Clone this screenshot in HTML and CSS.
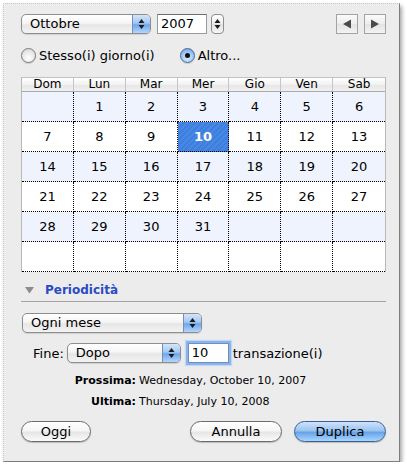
FILE: index.html
```html
<!DOCTYPE html>
<html>
<head>
<meta charset="utf-8">
<link rel="stylesheet" href="styles.css">
</head>
<body>
<div class="window">
  <div class="top-row">
    <div class="popup month">
      <span class="popup-label">Ottobre</span>
      <span class="popup-arrows"><svg width="7" height="12" viewBox="0 0 7 12"><path d="M3.5 1 L6.5 5 L0.5 5 Z M0.5 7 L6.5 7 L3.5 11 Z" fill="#1b1b1b"/></svg></span>
    </div>
    <div class="textfield year">2007</div>
    <div class="stepper"><svg width="7" height="12" viewBox="0 0 7 12"><path d="M3.5 1 L6.5 5 L0.5 5 Z M0.5 7 L6.5 7 L3.5 11 Z" fill="#1b1b1b"/></svg></div>
    <div class="spacer"></div>
    <div class="navbtn"><svg width="10" height="10" viewBox="0 0 10 10"><path d="M1 5 L9 0.5 L9 9.5 Z" fill="#4a4a4a"/></svg></div>
    <div class="navbtn"><svg width="10" height="10" viewBox="0 0 10 10"><path d="M9 5 L1 0.5 L1 9.5 Z" fill="#4a4a4a"/></svg></div>
  </div>

  <div class="radio-row">
    <label class="radio"><span class="radio-dot"></span>Stesso(i) giorno(i)</label>
    <label class="radio checked"><span class="radio-dot"></span>Altro...</label>
  </div>

  <div class="cal">
    <div class="hd">Dom</div><div class="hd">Lun</div><div class="hd">Mar</div><div class="hd">Mer</div><div class="hd">Gio</div><div class="hd">Ven</div><div class="hd last">Sab</div>

    <div class="c alt"></div><div class="c alt">1</div><div class="c alt">2</div><div class="c alt">3</div><div class="c alt">4</div><div class="c alt">5</div><div class="c alt last">6</div>
    <div class="c">7</div><div class="c">8</div><div class="c">9</div><div class="c sel">10</div><div class="c">11</div><div class="c">12</div><div class="c last">13</div>
    <div class="c alt">14</div><div class="c alt">15</div><div class="c alt">16</div><div class="c alt">17</div><div class="c alt">18</div><div class="c alt">19</div><div class="c alt last">20</div>
    <div class="c">21</div><div class="c">22</div><div class="c">23</div><div class="c">24</div><div class="c">25</div><div class="c">26</div><div class="c last">27</div>
    <div class="c alt">28</div><div class="c alt">29</div><div class="c alt">30</div><div class="c alt">31</div><div class="c alt"></div><div class="c alt"></div><div class="c alt last"></div>
    <div class="c"></div><div class="c"></div><div class="c"></div><div class="c"></div><div class="c"></div><div class="c"></div><div class="c last"></div>
  </div>

  <div class="disclosure">
    <svg width="9" height="7" viewBox="0 0 9 7"><path d="M0 0 L9 0 L4.5 6.5 Z" fill="#8c8c8c"/></svg>
    <span>Periodicità</span>
  </div>
  <div class="separator"></div>

  <div class="popup freq">
    <span class="popup-label">Ogni mese</span>
    <span class="popup-arrows"><svg width="7" height="12" viewBox="0 0 7 12"><path d="M3.5 1 L6.5 5 L0.5 5 Z M0.5 7 L6.5 7 L3.5 11 Z" fill="#1b1b1b"/></svg></span>
  </div>

  <div class="fine-row">
    <span class="fine-label">Fine:</span>
    <div class="popup end">
      <span class="popup-label">Dopo</span>
      <span class="popup-arrows"><svg width="7" height="12" viewBox="0 0 7 12"><path d="M3.5 1 L6.5 5 L0.5 5 Z M0.5 7 L6.5 7 L3.5 11 Z" fill="#1b1b1b"/></svg></span>
    </div>
    <div class="textfield count">10</div>
    <span class="unit">transazione(i)</span>
  </div>

  <div class="info">
    <span class="info-key">Prossima:</span><span class="info-val">Wednesday, October 10, 2007</span>
    <span class="info-key">Ultima:</span><span class="info-val">Thursday, July 10, 2008</span>
  </div>

  <div class="buttons">
    <button class="btn oggi">Oggi</button>
    <div class="spacer"></div>
    <button class="btn annulla">Annulla</button>
    <button class="btn default duplica">Duplica</button>
  </div>
</div>
</body>
</html>
```

FILE: styles.css
```css
html, body {
  margin: 0;
  padding: 0;
  background: #ffffff;
}

body {
  font-family: "DejaVu Sans", "Liberation Sans", sans-serif;
  font-size: 12px;
  color: #000;
}

.window {
  box-sizing: border-box;
  margin: 3px 0 0 3px;
  width: 397px;
  height: 459px;
  background: #ececec;
  border-left: 1px dotted #c9c9c9;
  border-top: 1px dotted #c9c9c9;
  border-right: 1px solid #7d7d7d;
  border-bottom: 1px solid #7d7d7d;
  box-shadow: 2px 3px 4px rgba(0, 0, 0, 0.35);
  padding: 10px 0 0 17px;
}

.spacer { flex: 1; }

/* top row */
.top-row {
  display: flex;
  align-items: center;
  height: 20px;
  width: 365px;
}

.popup {
  box-sizing: border-box;
  display: flex;
  height: 20px;
  border: 1px solid #8e8e8e;
  border-radius: 5px;
  background: linear-gradient(#ffffff, #f5f5f5 45%, #e6e6e6 55%, #f3f3f3);
  box-shadow: 0 1px 1px rgba(0, 0, 0, 0.12);
  overflow: hidden;
}
.popup-label {
  flex: 1;
  padding-left: 8px;
  line-height: 18px;
  font-size: 13px;
}
.popup-arrows {
  width: 17px;
  display: flex;
  align-items: center;
  justify-content: center;
  border-left: 1px solid #7a8fae;
  background: linear-gradient(#d3e5fa, #a3c8f3 45%, #6fa6ec 55%, #b3d6fb);
}
.month { width: 130px; }

.textfield {
  box-sizing: border-box;
  height: 20px;
  background: #fff;
  border: 1px solid #9a9a9a;
  border-top-color: #6d6d6d;
  font-size: 13px;
  line-height: 18px;
  padding-left: 3px;
}
.year {
  width: 50px;
  margin-left: 6px;
}
.stepper {
  box-sizing: border-box;
  width: 13px;
  height: 20px;
  margin-left: 4px;
  border: 1px solid #8e8e8e;
  border-radius: 4px;
  background: linear-gradient(#ffffff, #eeeeee 50%, #e2e2e2 51%, #f6f6f6);
  display: flex;
  align-items: center;
  justify-content: center;
}

.navbtn {
  box-sizing: border-box;
  width: 22px;
  height: 20px;
  border: 1px solid #a3a3a3;
  background: linear-gradient(#fbfbfb, #ededed 50%, #e3e3e3 51%, #f3f3f3);
  display: flex;
  align-items: center;
  justify-content: center;
  margin-left: 6px;
}

/* radios */
.radio-row {
  display: flex;
  align-items: center;
  margin-top: 14px;
  height: 15px;
  font-size: 13px;
}
.radio {
  display: flex;
  align-items: center;
  gap: 3px;
}
.radio + .radio { margin-left: 25px; }
.radio-dot {
  box-sizing: border-box;
  width: 15px;
  height: 15px;
  border-radius: 50%;
  border: 1px solid #7b7b7b;
  background: radial-gradient(circle at 50% 70%, #ffffff, #e6e6e6 60%, #cfcfcf);
  box-shadow: 0 1px 1px rgba(0, 0, 0, 0.15);
  position: relative;
}
.radio.checked .radio-dot {
  border-color: #4b6a9a;
  background: radial-gradient(circle at 50% 70%, #d8ecff, #9cc6f3 55%, #5f98de);
}
.radio.checked .radio-dot::after {
  content: "";
  position: absolute;
  left: 4px;
  top: 4px;
  width: 5px;
  height: 5px;
  border-radius: 50%;
  background: #111;
}

/* calendar */
.cal {
  box-sizing: border-box;
  margin-top: 14px;
  width: 365px;
  display: grid;
  grid-template-columns: repeat(7, 1fr);
  grid-template-rows: 14px repeat(6, 30px);
  border-top: 1px solid #c2c2c2;
  border-left: 1px solid #b9b9b9;
  border-right: 1px solid #b9b9b9;
  background: #fff;
}
.hd {
  box-sizing: border-box;
  border-right: 1px solid #c6c6c6;
  border-bottom: 1px solid #a9a9a9;
  background: linear-gradient(#ffffff, #f2f2f2 50%, #e6e6e6 51%, #f0f0f0);
  text-align: center;
  font-size: 12px;
  line-height: 13px;
}
.c {
  box-sizing: border-box;
  border-right: 1px dotted #000;
  border-bottom: 1px dotted #000;
  text-align: center;
  font-size: 13px;
  line-height: 29px;
}
.hd.last, .c.last { border-right: none; }
.c.alt { background: #eef3fd; }
.c.sel {
  background: repeating-linear-gradient(135deg, #3c7fdf 0 2px, #4888e3 2px 4px);
  color: #fff;
  font-weight: bold;
}

/* disclosure */
.disclosure {
  display: flex;
  align-items: center;
  margin-top: 10px;
  height: 15px;
  padding-left: 4px;
}
.disclosure svg { margin-top: 1px; }
.disclosure span {
  margin-left: 11px;
  color: #2a4bc4;
  font-weight: bold;
  font-size: 12px;
}
.separator {
  margin-top: 4px;
  width: 365px;
  height: 1px;
  background: #a3a3a3;
}

.freq {
  width: 180px;
  margin-top: 11px;
  margin-left: 1px;
}

.fine-row {
  display: flex;
  align-items: center;
  margin-top: 10px;
  height: 20px;
  padding-left: 12px;
  font-size: 13px;
}
.end {
  width: 114px;
  margin-left: 3px;
}
.count {
  width: 41px;
  margin-left: 7px;
  border-color: #6f8fc2;
  box-shadow: 0 0 0 2px #8db4ea, 0 0 1px 3px #c2d8f6;
}
.unit { margin-left: 4px; }

/* info */
.info {
  margin-top: 7px;
  display: grid;
  grid-template-columns: 115px auto;
  column-gap: 3px;
  grid-auto-rows: 21px;
  align-items: center;
  font-size: 11px;
}
.info-key {
  text-align: right;
  font-weight: bold;
}

/* buttons */
.buttons {
  display: flex;
  align-items: center;
  margin-top: 9px;
  width: 365px;
}
.btn {
  box-sizing: border-box;
  height: 21px;
  border: 1px solid #6b6b6b;
  border-radius: 11px;
  background: linear-gradient(#ffffff, #f6f6f6 45%, #e6e6e6 55%, #fbfbfb);
  box-shadow: 0 1px 1px rgba(0, 0, 0, 0.2);
  font-family: "DejaVu Sans", "Liberation Sans", sans-serif;
  font-size: 13px;
  padding: 0;
  color: #000;
}
.oggi { width: 70px; }
.annulla { width: 92px; }
.duplica { width: 92px; margin-left: 12px; }
.btn.default {
  border-color: #3d5f98;
  background: linear-gradient(#cfe3fa, #9cc4f1 45%, #67a2ea 55%, #a9d6fb);
}
```
